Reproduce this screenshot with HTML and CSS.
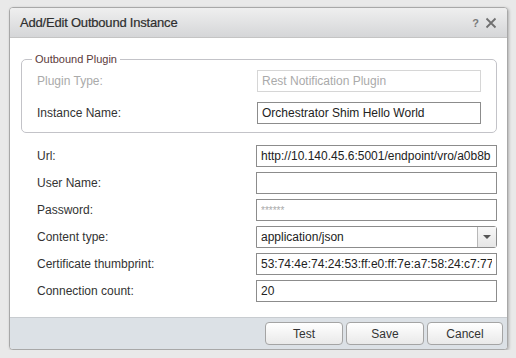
FILE: index.html
```html
<!DOCTYPE html>
<html lang="en">
<head>
    <meta charset="UTF-8">
    <title>Add/Edit Outbound Instance</title>
    <link rel="stylesheet" href="styles.css">
</head>
<body>
    <div class="dialog">
        <div class="titlebar">
            <span class="title">Add/Edit Outbound Instance</span>
            <span class="tools">
                <span class="help">?</span>
                <svg class="close" width="12" height="12" viewBox="0 0 12 12">
                    <path d="M1.5 1.5 L10.5 10.5 M10.5 1.5 L1.5 10.5" stroke="#707070" stroke-width="1.8" fill="none"/>
                </svg>
            </span>
        </div>
        <div class="content">
            <fieldset class="group">
                <legend>Outbound Plugin</legend>
                <div class="row disabled">
                    <label>Plugin Type:</label>
                    <input type="text" value="Rest Notification Plugin" disabled>
                </div>
                <div class="row">
                    <label>Instance Name:</label>
                    <input type="text" value="Orchestrator Shim Hello World">
                </div>
            </fieldset>
            <div class="fields">
                <div class="row">
                    <label>Url:</label>
                    <input type="text" value="http://10.140.45.6:5001/endpoint/vro/a0b8b">
                </div>
                <div class="row">
                    <label>User Name:</label>
                    <input type="text" value="">
                </div>
                <div class="row">
                    <label>Password:</label>
                    <input type="text" class="masked" value="******">
                </div>
                <div class="row">
                    <label>Content type:</label>
                    <div class="select">
                        <span class="value">application/json</span>
                        <span class="arrow"></span>
                    </div>
                </div>
                <div class="row">
                    <label>Certificate thumbprint:</label>
                    <input type="text" value="53:74:4e:74:24:53:ff:e0:ff:7e:a7:58:24:c7:77">
                </div>
                <div class="row">
                    <label>Connection count:</label>
                    <input type="text" value="20">
                </div>
            </div>
        </div>
        <div class="footer">
            <button class="btn btn-test">Test</button>
            <button class="btn btn-save">Save</button>
            <button class="btn btn-cancel">Cancel</button>
        </div>
    </div>
</body>
</html>
```

FILE: styles.css
```css
body {
    margin: 0;
    padding: 7px 0 0 9px;
    background-color: #e9e9e9;
    font-family: "Liberation Sans", Arial, sans-serif;
    font-size: 12px;
    color: #333;
}

.dialog {
    width: 497px;
    border: 1px solid #a8a8a8;
    border-radius: 4px;
    background-color: #fff;
    box-shadow: 1px 1px 3px rgba(0, 0, 0, 0.25);
    overflow: hidden;
}

.titlebar {
    height: 29px;
    display: flex;
    align-items: center;
    justify-content: space-between;
    padding: 0 10px 0 10px;
    background: linear-gradient(#efefef, #d5d6d8);
    border-bottom: 1px solid #c4c4c4;
}

.title {
    font-size: 13px;
    letter-spacing: -0.2px;
    color: #2e2e2e;
    -webkit-text-stroke: 0.2px #2e2e2e;
}

.tools {
    display: flex;
    align-items: center;
    gap: 6px;
}

.help {
    font-size: 11px;
    font-weight: bold;
    color: #7a7a7a;
}

.content {
    padding: 15px 10px 10px 11px;
}

.group {
    margin: 0;
    padding: 5px 15px 8px 15px;
    border: 1px solid #c3c3c8;
    border-radius: 5px;
}

.group legend {
    padding: 0 3px;
    margin-left: -5px;
    color: #5b3a3a;
    font-size: 11px;
}

.row {
    display: grid;
    grid-template-columns: 220px 1fr;
    align-items: center;
    height: 22px;
    margin-bottom: 10px;
}

.group .row:last-child {
    margin-bottom: 0;
}

.fields {
    padding: 12px 0 0 16px;
}

.fields .row {
    grid-template-columns: 219px 1fr;
    margin-bottom: 5px;
}

label {
    color: #333;
}

input {
    height: 22px;
    box-sizing: border-box;
    margin: 0;
    padding: 0 4px;
    border: 1px solid #8c8c8c;
    font-family: "Liberation Sans", Arial, sans-serif;
    font-size: 12px;
    color: #222;
    background-color: #fff;
}

.disabled label {
    color: #aaa;
}

.disabled input {
    border-color: #d6d6d6;
    color: #aaa;
    background-color: #fff;
}

.masked {
    color: #aaa;
    font-size: 10px;
}

.select {
    height: 22px;
    box-sizing: border-box;
    display: flex;
    border: 1px solid #8c8c8c;
    border-radius: 0 3px 3px 0;
}

.select .value {
    flex: 1;
    padding: 0 4px;
    line-height: 20px;
    color: #222;
}

.select .arrow {
    width: 18px;
    border-left: 1px solid #b8b8b8;
    background: linear-gradient(#f8f8f8, #e6e6e6);
    position: relative;
}

.select .arrow::after {
    content: "";
    position: absolute;
    left: 5px;
    top: 8px;
    border-left: 4px solid transparent;
    border-right: 4px solid transparent;
    border-top: 4px solid #555;
}

.footer {
    display: flex;
    justify-content: flex-end;
    gap: 3px;
    padding: 4px 4px 4px 0;
    background-color: #dce1e6;
    border-top: 1px solid #c8ccd0;
}

.btn {
    height: 23px;
    padding: 0;
    border: 1px solid #a4a4a4;
    border-radius: 4px;
    background: linear-gradient(#ffffff, #e9e9e9);
    font-family: "Liberation Sans", Arial, sans-serif;
    font-size: 12px;
    color: #333;
    cursor: pointer;
}

.btn-test {
    width: 78px;
}

.btn-save {
    width: 78px;
}

.btn-cancel {
    width: 76px;
}
```
